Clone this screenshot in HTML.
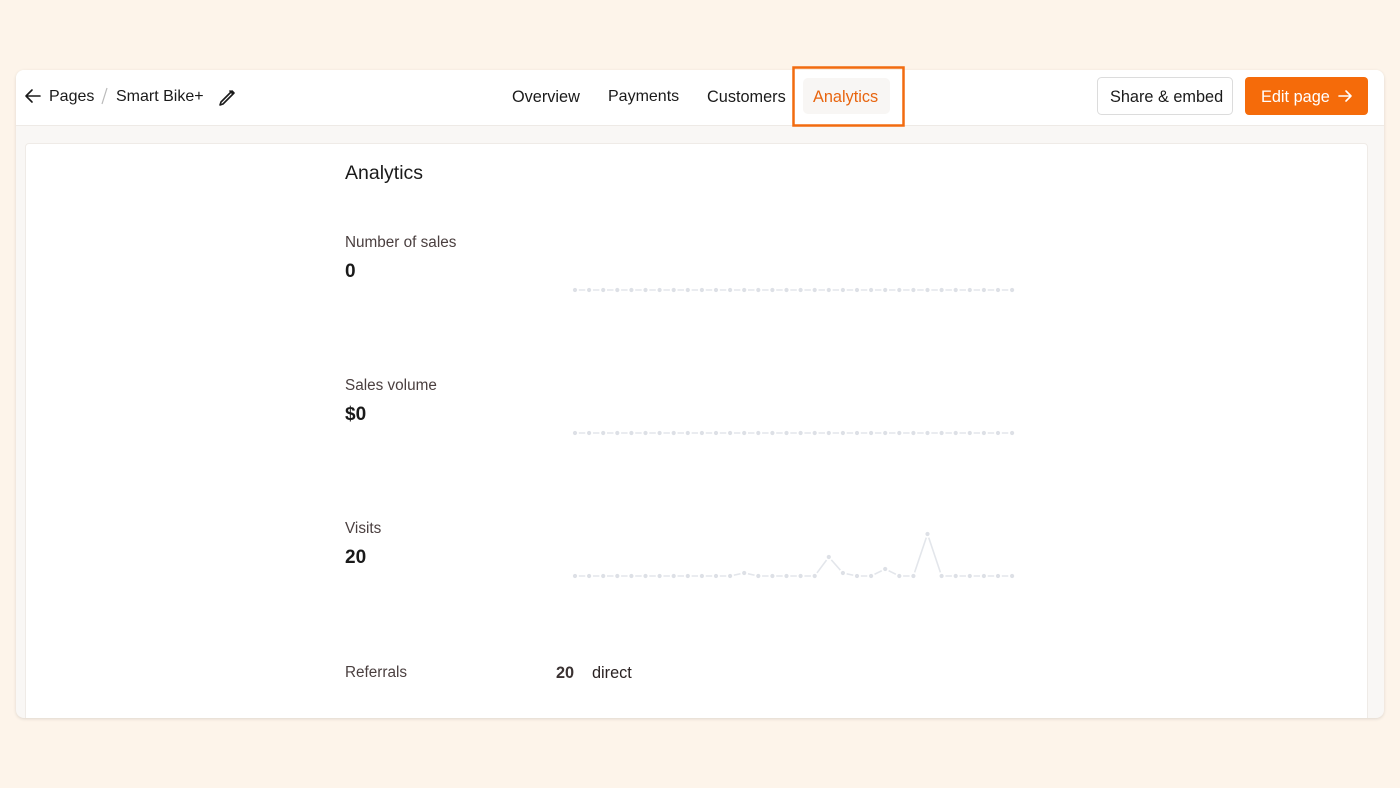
<!DOCTYPE html>
<html><head><meta charset="utf-8"><style>
*{margin:0;padding:0;box-sizing:border-box}
body{width:1400px;height:788px;background:#fdf4ea;font-family:"Liberation Sans",sans-serif;color:#1a1a1a;position:relative;overflow:hidden}
.card{position:absolute;left:16px;top:70px;width:1368px;height:648px;background:#f9f7f5;border-radius:8px;box-shadow:0 1px 3px rgba(0,0,0,.12);overflow:hidden}
.hdr{position:absolute;left:0;top:0;width:1368px;height:56px;background:#fff;border-bottom:1px solid #eeeae6}
.panel{position:absolute;left:9px;top:73px;width:1343px;height:600px;background:#fff;border:1px solid #efebe7;border-radius:4px}
.t{position:absolute;white-space:nowrap}
</style></head><body>
<div class="card">
 <div class="hdr"></div>
 <div class="panel"></div>
</div>
<svg style="position:absolute;left:0;top:0" width="1400" height="788">
 <g fill="none" stroke="#1a1a1a" stroke-width="1.6" stroke-linecap="round" stroke-linejoin="round">
  <path d="M40 96H26M32 90l-6 6 6 6"/>
  <path d="M221 102l-1 3 3-1 11-11-2-2zM230 91l2 2"/>
 </g>
 <line x1="102" y1="104" x2="107" y2="88" stroke="#bbb" stroke-width="1.2"/>
 <rect x="793.5" y="67.5" width="110" height="58" fill="none" stroke="#f26b0f" stroke-width="2.5"/>
 <rect x="803" y="78" width="87" height="36" rx="5" fill="#f8f6f4"/>
 <rect x="1097.5" y="77.5" width="135" height="37" rx="4" fill="#fff" stroke="#dcdcdc"/>
 <rect x="1245" y="77" width="123" height="38" rx="4" fill="#f56b0a"/>
 <path d="M1339 96h12M1346 91l5 5-5 5" fill="none" stroke="#fff" stroke-width="1.6" stroke-linecap="round" stroke-linejoin="round"/>
 <g stroke="#e3e6eb" stroke-width="1.6" fill="none">
  <line x1="575" y1="290" x2="1012" y2="290"/>
  <line x1="575" y1="433" x2="1012" y2="433"/>
  <polyline points="575,576 730.1,576 744.2,573 758.3,576 814.7,576 828.8,557 842.9,573 857,576 871.1,576 885.2,569 899.3,576 913.4,576 927.5,534 941.6,576 1012.1,576"/>
 </g>
 <g fill="#dde0e6" stroke="#fff" stroke-width="1.8" id="d1">
  <circle cx="575" cy="290" r="3"/><circle cx="589.1" cy="290" r="3"/><circle cx="603.2" cy="290" r="3"/><circle cx="617.3" cy="290" r="3"/><circle cx="631.4" cy="290" r="3"/><circle cx="645.5" cy="290" r="3"/><circle cx="659.6" cy="290" r="3"/><circle cx="673.7" cy="290" r="3"/><circle cx="687.8" cy="290" r="3"/><circle cx="701.9" cy="290" r="3"/><circle cx="716" cy="290" r="3"/><circle cx="730.1" cy="290" r="3"/><circle cx="744.2" cy="290" r="3"/><circle cx="758.3" cy="290" r="3"/><circle cx="772.4" cy="290" r="3"/><circle cx="786.5" cy="290" r="3"/><circle cx="800.6" cy="290" r="3"/><circle cx="814.7" cy="290" r="3"/><circle cx="828.8" cy="290" r="3"/><circle cx="842.9" cy="290" r="3"/><circle cx="857" cy="290" r="3"/><circle cx="871.1" cy="290" r="3"/><circle cx="885.2" cy="290" r="3"/><circle cx="899.3" cy="290" r="3"/><circle cx="913.4" cy="290" r="3"/><circle cx="927.5" cy="290" r="3"/><circle cx="941.6" cy="290" r="3"/><circle cx="955.7" cy="290" r="3"/><circle cx="969.8" cy="290" r="3"/><circle cx="983.9" cy="290" r="3"/><circle cx="998" cy="290" r="3"/><circle cx="1012.1" cy="290" r="3"/>
 </g>
 <use href="#d1" y="143"/>
 <g fill="#dde0e6" stroke="#fff" stroke-width="1.8">
  <circle cx="575" cy="576" r="3"/><circle cx="589.1" cy="576" r="3"/><circle cx="603.2" cy="576" r="3"/><circle cx="617.3" cy="576" r="3"/><circle cx="631.4" cy="576" r="3"/><circle cx="645.5" cy="576" r="3"/><circle cx="659.6" cy="576" r="3"/><circle cx="673.7" cy="576" r="3"/><circle cx="687.8" cy="576" r="3"/><circle cx="701.9" cy="576" r="3"/><circle cx="716" cy="576" r="3"/><circle cx="730.1" cy="576" r="3"/><circle cx="744.2" cy="573" r="3"/><circle cx="758.3" cy="576" r="3"/><circle cx="772.4" cy="576" r="3"/><circle cx="786.5" cy="576" r="3"/><circle cx="800.6" cy="576" r="3"/><circle cx="814.7" cy="576" r="3"/><circle cx="828.8" cy="557" r="3"/><circle cx="842.9" cy="573" r="3"/><circle cx="857" cy="576" r="3"/><circle cx="871.1" cy="576" r="3"/><circle cx="885.2" cy="569" r="3"/><circle cx="899.3" cy="576" r="3"/><circle cx="913.4" cy="576" r="3"/><circle cx="927.5" cy="534" r="3"/><circle cx="941.6" cy="576" r="3"/><circle cx="955.7" cy="576" r="3"/><circle cx="969.8" cy="576" r="3"/><circle cx="983.9" cy="576" r="3"/><circle cx="998" cy="576" r="3"/><circle cx="1012.1" cy="576" r="3"/>
 </g>
</svg>
<div class="t" style="left:49px;top:88px;font-size:16px">Pages</div>
<div class="t" style="left:116px;top:88px;font-size:16px">Smart Bike+</div>
<div class="t" style="left:512px;top:88px;font-size:16.3px">Overview</div>
<div class="t" style="left:608px;top:88px;font-size:16px">Payments</div>
<div class="t" style="left:707px;top:88px;font-size:16.3px">Customers</div>
<div class="t" style="left:813px;top:88px;font-size:16.3px;color:#e8650f">Analytics</div>
<div class="t" style="left:1110px;top:88px;font-size:16.3px">Share &amp; embed</div>
<div class="t" style="left:1261px;top:88px;font-size:16.3px;color:#fff">Edit page</div>
<div class="t" style="left:345px;top:162px;font-size:19.5px">Analytics</div>
<div class="t" style="left:345px;top:234px;font-size:15.3px;color:#4a3f3f">Number of sales</div>
<div class="t" style="left:345px;top:261px;font-size:19px;font-weight:bold">0</div>
<div class="t" style="left:345px;top:377px;font-size:15.3px;color:#4a3f3f">Sales volume</div>
<div class="t" style="left:345px;top:404px;font-size:19px;font-weight:bold">$0</div>
<div class="t" style="left:345px;top:520px;font-size:15.3px;color:#4a3f3f">Visits</div>
<div class="t" style="left:345px;top:547px;font-size:19px;font-weight:bold">20</div>
<div class="t" style="left:345px;top:664px;font-size:15.3px;color:#4a3f3f">Referrals</div>
<div class="t" style="left:556px;top:664px;font-size:16.3px;font-weight:bold;color:#3a3232">20</div>
<div class="t" style="left:592px;top:664px;font-size:16.3px;color:#2a2222">direct</div>
</body></html>
